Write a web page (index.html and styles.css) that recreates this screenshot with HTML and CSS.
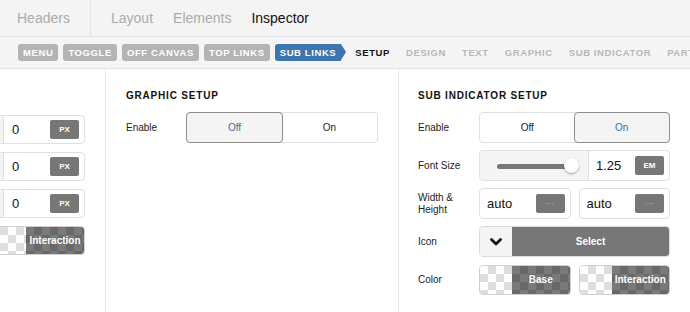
FILE: index.html
```html
<!DOCTYPE html>
<html lang="en">
<head>
  <meta charset="UTF-8">
  <meta name="viewport" content="width=device-width, initial-scale=1.0">
  <title>Inspector</title>
  <link rel="stylesheet" href="styles.css">
</head>
<body>
  <div class="tabs">
    <div class="tab-group first">
      <span class="tab">Headers</span>
    </div>
    <div class="tab-group">
      <span class="tab">Layout</span>
      <span class="tab">Elements</span>
      <span class="tab active">Inspector</span>
    </div>
  </div>

  <div class="crumbs">
    <span class="pill">Menu</span>
    <span class="pill">Toggle</span>
    <span class="pill">Off Canvas</span>
    <span class="pill">Top Links</span>
    <span class="pill current">Sub Links</span>
    <span class="step active">Setup</span>
    <span class="step">Design</span>
    <span class="step">Text</span>
    <span class="step">Graphic</span>
    <span class="step">Sub Indicator</span>
    <span class="step">Parts</span>
  </div>

  <div class="panels">
    <!-- previous panel, scrolled off to the left -->
    <div class="panel panel-left">
      <div class="unit-input wide">
        <span class="value">0</span>
        <span class="unit">PX</span>
      </div>
      <div class="unit-input wide">
        <span class="value">0</span>
        <span class="unit">PX</span>
      </div>
      <div class="unit-input wide">
        <span class="value">0</span>
        <span class="unit">PX</span>
      </div>
      <div class="swatch wide">
        <span class="swatch-clear"></span>
        <span class="swatch-fill">Interaction</span>
      </div>
    </div>

    <div class="panel">
      <h2>Graphic Setup</h2>
      <div class="row">
        <label>Enable</label>
        <div class="toggle">
          <span class="toggle-opt selected">Off</span>
          <span class="toggle-opt">On</span>
        </div>
      </div>
    </div>

    <div class="panel">
      <h2>Sub Indicator Setup</h2>
      <div class="row">
        <label>Enable</label>
        <div class="toggle">
          <span class="toggle-opt">Off</span>
          <span class="toggle-opt selected">On</span>
        </div>
      </div>
      <div class="row">
        <label>Font Size</label>
        <div class="slider-input">
          <div class="slider">
            <span class="track"></span>
            <span class="thumb"></span>
          </div>
          <div class="slider-value">
            <span class="value">1.25</span>
            <span class="unit">EM</span>
          </div>
        </div>
      </div>
      <div class="row">
        <label>Width &amp;<br>Height</label>
        <div class="pair">
          <div class="unit-input">
            <span class="value">auto</span>
            <span class="unit dots">···</span>
          </div>
          <div class="unit-input">
            <span class="value">auto</span>
            <span class="unit dots">···</span>
          </div>
        </div>
      </div>
      <div class="row">
        <label>Icon</label>
        <div class="select">
          <span class="select-arrow">
            <svg width="12" height="8" viewBox="0 0 12 8"><path d="M1.5 1.5 L6 6 L10.5 1.5" fill="none" stroke="#111" stroke-width="2.8" stroke-linecap="round" stroke-linejoin="round"/></svg>
          </span>
          <span class="select-label">Select</span>
        </div>
      </div>
      <div class="row">
        <label>Color</label>
        <div class="pair">
          <div class="swatch">
            <span class="swatch-clear"></span>
            <span class="swatch-fill">Base</span>
          </div>
          <div class="swatch">
            <span class="swatch-clear"></span>
            <span class="swatch-fill">Interaction</span>
          </div>
        </div>
      </div>
    </div>
  </div>
</body>
</html>
```

FILE: styles.css
```css
body {
  margin: 0;
  font-family: "Liberation Sans", Arial, sans-serif;
  background-color: #ffffff;
  color: #222222;
  overflow: hidden;
}

/* top tabs */
.tabs {
  display: flex;
  height: 36px;
  background-color: #f4f4f4;
  border-bottom: 1px solid #e3e3e3;
}

.tab-group {
  display: flex;
  align-items: center;
  gap: 20px;
  padding: 0 20px;
}

.tab-group.first {
  width: 53px;
  padding-left: 17px;
  border-right: 1px solid #e3e3e3;
}

.tab {
  font-size: 14px;
  color: #ababab;
}

.tab.active {
  color: #111111;
}

/* breadcrumb row */
.crumbs {
  display: flex;
  align-items: center;
  height: 31px;
  padding-left: 18px;
  background-color: #f5f5f5;
  border-bottom: 1px solid #e3e3e3;
  white-space: nowrap;
  overflow: hidden;
}

.pill {
  position: relative;
  margin-right: 5px;
  padding: 0 5px;
  height: 17px;
  line-height: 18px;
  border-radius: 3px;
  background-color: #b4b4b4;
  color: #ffffff;
  font-size: 9.5px;
  font-weight: bold;
  letter-spacing: 0.6px;
  text-transform: uppercase;
}

.pill.current {
  background-color: #3c75b0;
  border-radius: 3px 0 0 3px;
  margin-right: 14px;
}

.pill.current::after {
  content: "";
  position: absolute;
  top: 0;
  right: -5px;
  border-top: 8.5px solid transparent;
  border-bottom: 8.5px solid transparent;
  border-left: 5px solid #3c75b0;
}

.step {
  margin-right: 16px;
  font-size: 9.5px;
  font-weight: bold;
  letter-spacing: 0.6px;
  text-transform: uppercase;
  color: #b8b8b8;
}

.step.active {
  color: #111111;
}

/* panels */
.panels {
  display: grid;
  grid-template-columns: 106px 293px 1fr;
  height: 244px;
}

.panel {
  padding: 20px 20px 0;
  border-right: 1px solid #e8e8e8;
  overflow: hidden;
}

.panel:last-child {
  border-right: none;
  padding-left: 19px;
}

.panel-left {
  display: flex;
  flex-direction: column;
  align-items: flex-end;
  gap: 8px;
  padding-top: 46px;
}

.panel h2 {
  margin: 0 0 10px;
  font-size: 10px;
  line-height: 13px;
  letter-spacing: 0.8px;
  text-transform: uppercase;
  color: #111111;
}

.row {
  display: grid;
  grid-template-columns: 60px 1fr;
  align-items: center;
  margin-bottom: 7px;
  height: 31px;
}

.panel:last-child .row {
  grid-template-columns: 61px 1fr;
}

.row label {
  font-size: 10px;
  line-height: 12px;
  color: #222222;
}

/* toggle */
.toggle {
  display: grid;
  grid-template-columns: 1fr 1fr;
  height: 31px;
  border: 1px solid #e0e0e0;
  border-radius: 4px;
  box-sizing: border-box;
}

.toggle-opt {
  display: flex;
  align-items: center;
  justify-content: center;
  font-size: 10px;
  color: #222222;
}

.toggle-opt.selected {
  margin: -1px;
  background-color: #f4f4f4;
  border: 1px solid #8d8d8d;
  border-radius: 4px;
  color: #3b6ea5;
}

/* inputs with unit */
.unit-input {
  display: flex;
  align-items: center;
  justify-content: space-between;
  height: 31px;
  padding: 0 5px 0 7px;
  border: 1px solid #e0e0e0;
  border-radius: 4px;
  box-sizing: border-box;
  background-color: #ffffff;
}

.unit-input.wide {
  width: 160px;
  height: 29px;
  flex-shrink: 0;
  padding-left: 86px;
  background: linear-gradient(to right, #f4f4f4 77px, #e0e0e0 77px, #e0e0e0 78px, #ffffff 78px);
}

.value {
  font-size: 13px;
  color: #111111;
}

.unit {
  width: 29px;
  height: 19px;
  line-height: 19px;
  text-align: center;
  border-radius: 2px;
  background-color: #777777;
  color: #ffffff;
  font-size: 8px;
  font-weight: bold;
}

.unit.dots {
  font-size: 9px;
  font-weight: normal;
  color: #bbbbbb;
}

.slider-input {
  display: grid;
  grid-template-columns: 109px 1fr;
  height: 31px;
  border: 1px solid #e0e0e0;
  border-radius: 4px;
  box-sizing: border-box;
  overflow: hidden;
}

.slider {
  position: relative;
  background-color: #f4f4f4;
  border-right: 1px solid #e0e0e0;
}

.slider .track {
  position: absolute;
  left: 17px;
  right: 17px;
  top: 13px;
  height: 5px;
  border-radius: 3px;
  background-color: #777777;
}

.slider .thumb {
  position: absolute;
  left: 84px;
  top: 7px;
  width: 15px;
  height: 15px;
  border-radius: 50%;
  background-color: #ffffff;
  box-shadow: 0 1px 2px rgba(0, 0, 0, 0.35);
}

.slider-value {
  display: flex;
  align-items: center;
  justify-content: space-between;
  padding: 0 5px 0 7px;
}

.pair {
  display: grid;
  grid-template-columns: 1fr 1fr;
  gap: 8px;
}

/* select */
.select {
  display: grid;
  grid-template-columns: 32px 1fr;
  height: 31px;
  border: 1px solid #dcdcdc;
  border-radius: 4px;
  box-sizing: border-box;
  overflow: hidden;
}

.select-arrow {
  display: flex;
  align-items: center;
  justify-content: center;
  background-color: #f4f4f4;
}

.select-label {
  display: flex;
  align-items: center;
  justify-content: center;
  background-color: #777777;
  color: #ffffff;
  font-size: 10px;
  font-weight: bold;
}

/* colour swatch */
.swatch {
  display: grid;
  grid-template-columns: 32px 1fr;
  height: 30px;
  border: 1px solid #cfcfcf;
  border-radius: 4px;
  box-sizing: border-box;
  overflow: hidden;
}

.swatch.wide {
  width: 110px;
  height: 29px;
  flex-shrink: 0;
  grid-template-columns: 50px 1fr;
}

.swatch-clear {
  background: repeating-conic-gradient(#dedede 0 25%, #ffffff 0 50%) 0 0 / 16px 16px;
}

.swatch-fill {
  display: flex;
  align-items: center;
  justify-content: center;
  background: repeating-conic-gradient(#686868 0 25%, #7a7a7a 0 50%) 0 0 / 16px 16px;
  color: #ffffff;
  font-size: 10px;
  font-weight: bold;
}
```
